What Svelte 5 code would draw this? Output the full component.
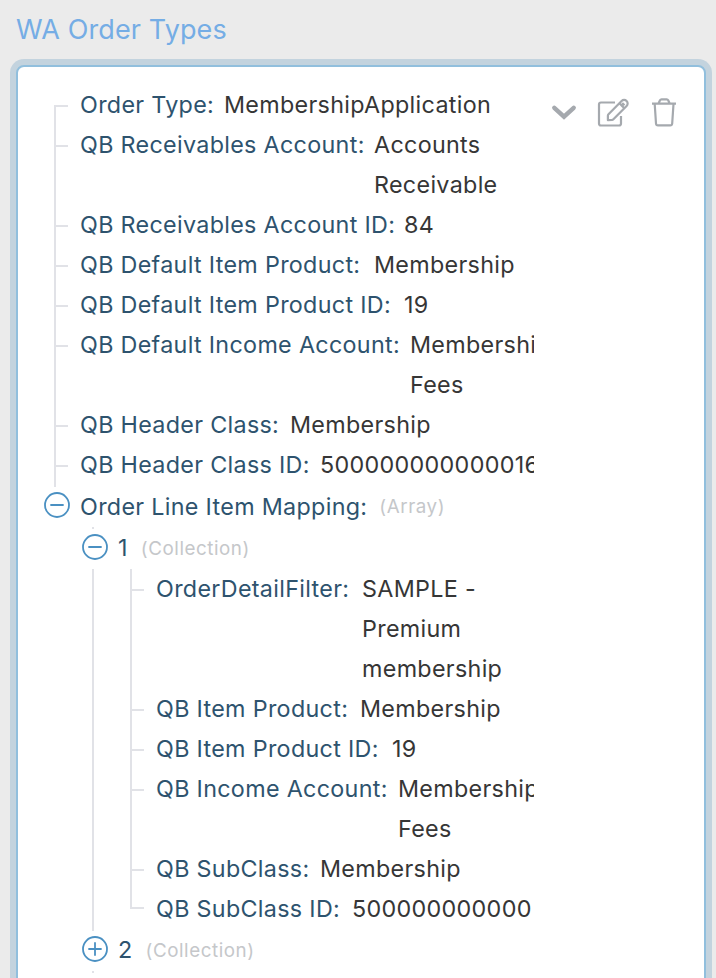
<script>
  const fields = [
    { key: 'Order Type:', lines: ['MembershipApplication'], w: 144 },
    { key: 'QB Receivables Account:', lines: ['Accounts', 'Receivable'], w: 294 },
    { key: 'QB Receivables Account ID:', lines: ['84'], w: 324 },
    { key: 'QB Default Item Product:', lines: ['Membership'], w: 294 },
    { key: 'QB Default Item Product ID:', lines: ['19'], w: 324 },
    { key: 'QB Default Income Account:', lines: ['Membership', 'Fees'], w: 330 },
    { key: 'QB Header Class:', lines: ['Membership'], w: 210 },
    { key: 'QB Header Class ID:', lines: ['500000000000016'], w: 240 }
  ];
  const items = [
    { key: 'OrderDetailFilter:', lines: ['SAMPLE -', 'Premium', 'membership'], w: 206 },
    { key: 'QB Item Product:', lines: ['Membership'], w: 204 },
    { key: 'QB Item Product ID:', lines: ['19'], w: 236 },
    { key: 'QB Income Account:', lines: ['Membership', 'Fees'], w: 242 },
    { key: 'QB SubClass:', lines: ['Membership'], w: 164 },
    { key: 'QB SubClass ID:', lines: ['500000000000'], w: 196 }
  ];
</script>

{#snippet leaf(field, first, last)}
  <li class="leaf">
    <span class="rail" class:first class:last></span>
    <span class="tick"></span>
    <span class="key" style="width: {field.w}px">{field.key}</span>
    <span class="value">{#each field.lines as line}<span>{line}</span>{/each}</span>
  </li>
{/snippet}

{#snippet toggle(open)}
  <svg class="toggle" width="26" height="26" viewBox="0 0 26 26">
    <circle cx="13" cy="13" r="12" />
    <path d={open ? 'M7 13H19' : 'M7 13H19M13 7V19'} />
  </svg>
{/snippet}

<main>
  <h1>WA Order Types</h1>
  <section class="card">
    <div class="tree">
      <ul class="leaves">
        {#each fields as field, i}{@render leaf(field, i === 0, false)}{/each}
      </ul>
      <div class="branch root">
        {@render toggle(true)}
        <span class="name">Order Line Item Mapping:</span>
        <span class="kind array">(Array)</span>
      </div>
      <div class="children">
        <div class="branch dotted">
          {@render toggle(true)}
          <span class="name">1</span>
          <span class="kind">(Collection)</span>
        </div>
        <div class="nested">
          <span class="trunk"></span>
          <ul class="leaves">
            {#each items as field, i}{@render leaf(field, false, i === items.length - 1)}{/each}
          </ul>
        </div>
        <div class="branch second">
          {@render toggle(false)}
          <span class="name">2</span>
          <span class="kind">(Collection)</span>
        </div>
        <span class="stub"></span>
      </div>
    </div>
    <div class="actions">
      <svg width="26" height="30" viewBox="0 0 26 30"><path d="M3.300 9.800L13 18.700L22.700 9.800" stroke-width="4.400" stroke-linecap="round" stroke-linejoin="miter" /></svg>
      <svg class="edit" width="34" height="30" viewBox="0 0 34 30" stroke-width="2.200">
        <path d="M19 4.500H5Q3 4.500 3 6.500V25.500Q3 27.500 5 27.500H23Q25 27.500 25 25.500V18" />
        <path d="M11.900 22.200V17.700Q11.900 16.800 12.500 16.200L25.600 3A3.500 3.500 0 0 1 30.600 8L17.400 21.200Q16.800 21.800 16 21.900Z" stroke-linejoin="round" />
        <path d="M23.400 5.300L28.300 10.200M26.200 5L28.500 7.300" />
      </svg>
      <svg class="trash" width="26" height="30" viewBox="0 0 26 30" stroke-width="2.200">
        <path d="M1 5.700H25M3.700 6L5 25.500Q5.100 27.400 7 27.400H19.200Q21 27.400 21.200 25.500L22.500 6M7.500 5.500L9 2.300Q9.500 1.300 10.500 1.300H15.700Q16.700 1.300 17.200 2.300L18.700 5.500" />
      </svg>
    </div>
  </section>
</main>

<style>
  :global(body) { margin: 0; background: #ebebeb; }
  main {
    box-sizing: border-box;
    width: 716px;
    height: 978px;
    overflow: hidden;
    padding: 0 10px 0 16px;
    font-family: Inter, 'Liberation Sans', sans-serif;
    font-size: 23.300px;
    line-height: 40px;
    letter-spacing: 0.320px;
    color: #363636;
  }
  h1 {
    margin: 0;
    height: 65px;
    box-sizing: border-box;
    padding-top: 10px;
    font-size: 27px;
    font-weight: 400;
    letter-spacing: 0.120px;
    color: #75ade5;
  }
  .card {
    box-sizing: border-box;
    height: 960px;
    display: flex;
    justify-content: space-between;
    padding: 18px 27px 0 26px;
    background: #fff;
    border: 2px solid #91bfdd;
    border-radius: 8px;
    box-shadow: 0 0 0 6px #c3d3de;
  }
  ul { list-style: none; margin: 0; padding: 0; }
  .tree { width: 490px; overflow: hidden; white-space: nowrap; }
  .tree > .leaves { padding-left: 10px; }
  .tree > .leaves .leaf:last-child { height: 42px; }
  .leaf { display: flex; }
  .rail { flex: none; width: 2px; background: #e1e2e7; }
  .rail.first { margin-top: 20px; }
  .rail.last { height: 20px; }
  .tick { flex: none; width: 12px; height: 2px; margin: 20px 12px 0 0; background: #e1e2e7; }
  .rail.last + .tick { margin-top: 18px; }
  .key { flex: none; color: #2e536e; }
  .value { display: flex; flex-direction: column; }
  .branch { height: 42px; display: flex; line-height: 43px; }
  .root { height: 40px; line-height: 40px; }
  .name { color: #2e536e; }
  .children .name { line-height: 41px; }
  .toggle { flex: none; margin: 7px 10px 0 0; fill: none; stroke: #4a90c2; stroke-width: 1.800; stroke-linecap: round; }
  .root .toggle { margin-top: 5px; }
  .kind { margin-left: 13px; font-size: 18.800px; letter-spacing: 0.550px; color: #c5c7ca; }
  .array { margin-left: 12px; }
  .children { padding-left: 38px; }
  .nested { display: flex; }
  .nested .leaves { margin-left: 36px; }
  .trunk { flex: none; width: 2px; margin: 0 0 -2px 10px; background: #e1e2e7; }
  .stub { display: block; width: 2px; height: 2px; margin-left: 10px; background: #e1e2e7; }
  .dotted { background: linear-gradient(#e1e2e7, #e1e2e7) 10px 0 / 2px 2px no-repeat; }
  .actions { display: flex; padding-top: 13px; }
  .actions svg { fill: none; stroke: #a5a9ae; }
  .edit { margin-left: 19px; }
  .trash { margin-left: 21px; }
</style>
